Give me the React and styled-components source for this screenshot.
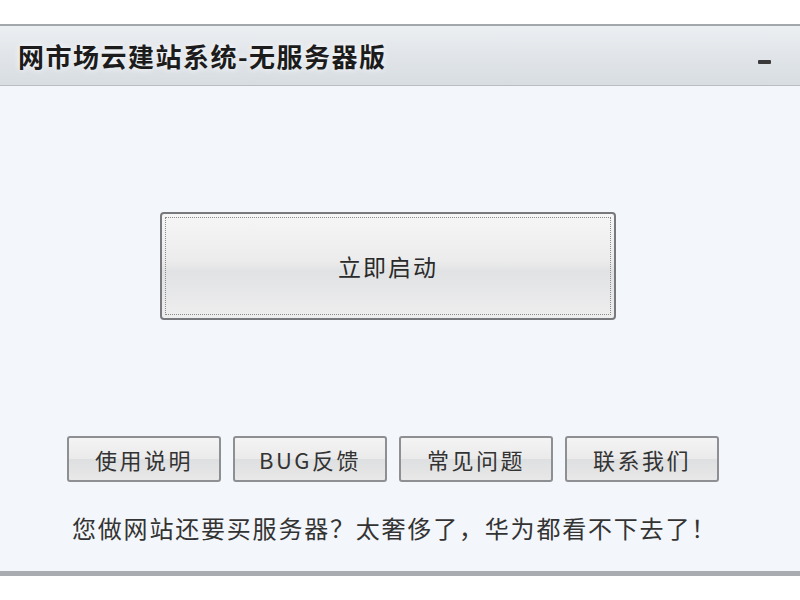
import React from "react";
import styled, { createGlobalStyle } from "styled-components";

const GlobalStyle = createGlobalStyle`
  html, body {
    margin: 0;
    padding: 0;
    background: #ffffff;
    font-family: "Noto Sans CJK SC", "Noto Sans", sans-serif;
  }
`;

const Page = styled.div`
  width: 800px;
  height: 600px;
  padding-top: 24px;
  box-sizing: border-box;
  background: #ffffff;
`;

const Window = styled.div`
  width: 800px;
  display: flex;
  flex-direction: column;
  border-top: 2px solid #a3a8ad;
  border-bottom: 5px solid #a9adb2;
  box-sizing: border-box;
`;

const TitleBar = styled.div`
  height: 60px;
  display: flex;
  align-items: center;
  justify-content: space-between;
  padding: 0 29px 0 18px;
  box-sizing: border-box;
  background: linear-gradient(to bottom, #eceff2 0%, #e2e6ea 45%, #d8dde2 100%);
  border-bottom: 1px solid #b9bec4;
`;

const Title = styled.div`
  font-size: 26px;
  font-weight: bold;
  color: #1c1c1c;
  letter-spacing: 1.5px;
  text-shadow: 0 0 6px rgba(255, 255, 255, 0.9);
`;

const MinButton = styled.div`
  width: 13px;
  height: 4px;
  margin-top: 12px;
  background: #3a3a3a;
  border-radius: 1px;
`;

const Body = styled.div`
  height: 485px;
  display: flex;
  flex-direction: column;
  padding: 126px 0 0 0;
  box-sizing: border-box;
  background: #f3f6fa;
`;

const StartButton = styled.div`
  position: relative;
  margin-left: 160px;
  width: 456px;
  height: 108px;
  display: flex;
  align-items: center;
  justify-content: center;
  box-sizing: border-box;
  border: 2px solid #77797c;
  border-radius: 4px;
  background: linear-gradient(to bottom, #f6f6f6 0%, #ececec 45%, #e1e2e4 55%, #eeeeef 100%);
  font-size: 23px;
  color: #2a2a2a;
  letter-spacing: 2px;

  &::after {
    content: "";
    position: absolute;
    inset: 3px;
    border: 1px dotted #8a8a8a;
  }
`;

const ButtonRow = styled.div`
  display: flex;
  gap: 12px;
  margin: 116px 0 0 67px;
`;

const SmallButton = styled.div`
  width: 154px;
  height: 46px;
  display: flex;
  align-items: center;
  justify-content: center;
  box-sizing: border-box;
  border: 2px solid #8d8f92;
  border-radius: 3px;
  background: linear-gradient(to bottom, #f4f4f4 0%, #eaeaea 50%, #dedfe0 51%, #e8e8e9 100%);
  font-size: 22px;
  color: #333333;
  letter-spacing: 2.5px;
`;

const Footer = styled.div`
  margin: 32px 0 0 72px;
  font-size: 24px;
  color: #333333;
  letter-spacing: 1.8px;
  line-height: 28px;
`;

const links = ["使用说明", "BUG反馈", "常见问题", "联系我们"];

const App = () => {
  return (
    <Page>
      <GlobalStyle />
      <Window>
        <TitleBar>
          <Title>网市场云建站系统-无服务器版</Title>
          <MinButton />
        </TitleBar>
        <Body>
          <StartButton>立即启动</StartButton>
          <ButtonRow>
            {links.map((label) => (
              <SmallButton key={label}>{label}</SmallButton>
            ))}
          </ButtonRow>
          <Footer>您做网站还要买服务器？太奢侈了，华为都看不下去了！</Footer>
        </Body>
      </Window>
    </Page>
  );
};

export default App;
